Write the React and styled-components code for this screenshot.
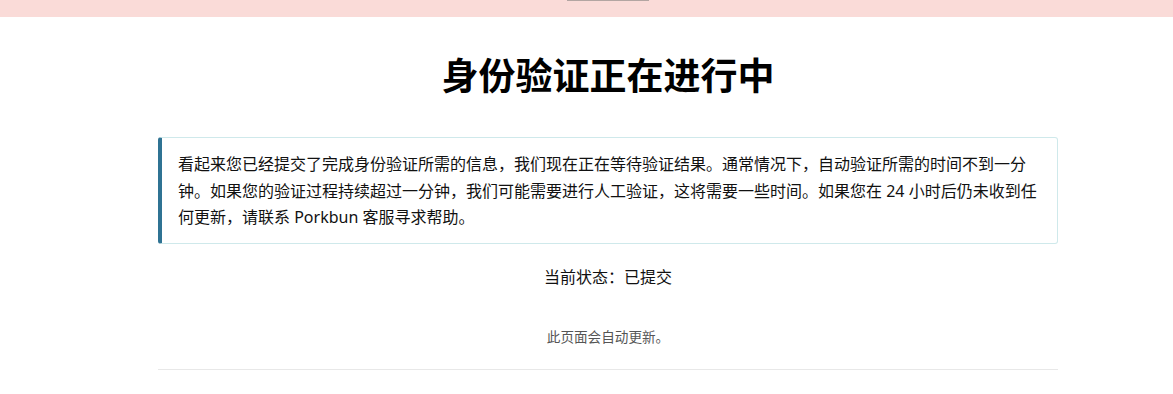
import React from 'react';
import styled, { createGlobalStyle } from 'styled-components';

const GlobalStyle = createGlobalStyle`
  html, body {
    margin: 0;
    padding: 0;
    background: #fff;
    font-family: "Noto Sans", "Noto Sans CJK SC", sans-serif;
    color: #111;
  }
`;

const Banner = styled.div`
  height: 17px;
  background-color: #fadbd8;
  display: flex;
  justify-content: center;
  padding-left: 43px;
`;

const BannerTab = styled.div`
  width: 82px;
  height: 1px;
  background-color: #b3a5a2;
`;

const Page = styled.main`
  padding-left: 43px;
`;

const Container = styled.div`
  width: 900px;
  margin: 0 auto;
  display: flex;
  flex-direction: column;
  align-items: center;
`;

const Title = styled.h1`
  margin: 35px 0 0;
  font-size: 37px;
  line-height: 48px;
  font-weight: 700;
  color: #000;
`;

const Notice = styled.div`
  box-sizing: border-box;
  width: 100%;
  margin-top: 37px;
  padding: 13px 20px 12px 16px;
  border: 1px solid #cfe9eb;
  border-left: 4px solid #2f7393;
  border-radius: 3px;
  font-size: 16px;
  line-height: 26.5px;
  color: #111;
`;

const Status = styled.p`
  margin: 20px 0 0;
  font-size: 16px;
  line-height: 26px;
  color: #111;
`;

const Hint = styled.p`
  margin: 37px 0 0;
  font-size: 13.6px;
  line-height: 20px;
  color: #555;
`;

const Divider = styled.hr`
  width: 100%;
  margin: 22px 0 0;
  border: none;
  border-top: 1px solid #e8e8e8;
`;

export default function App() {
  return (
    <>
      <GlobalStyle />
      <Banner>
        <BannerTab />
      </Banner>
      <Page>
        <Container>
          <Title>身份验证正在进行中</Title>
          <Notice>
            看起来您已经提交了完成身份验证所需的信息，我们现在正在等待验证结果。通常情况下，自动验证所需的时间不到一分钟。如果您的验证过程持续超过一分钟，我们可能需要进行人工验证，这将需要一些时间。如果您在 24 小时后仍未收到任何更新，请联系 Porkbun 客服寻求帮助。
          </Notice>
          <Status>当前状态：已提交</Status>
          <Hint>此页面会自动更新。</Hint>
          <Divider />
        </Container>
      </Page>
    </>
  );
}
